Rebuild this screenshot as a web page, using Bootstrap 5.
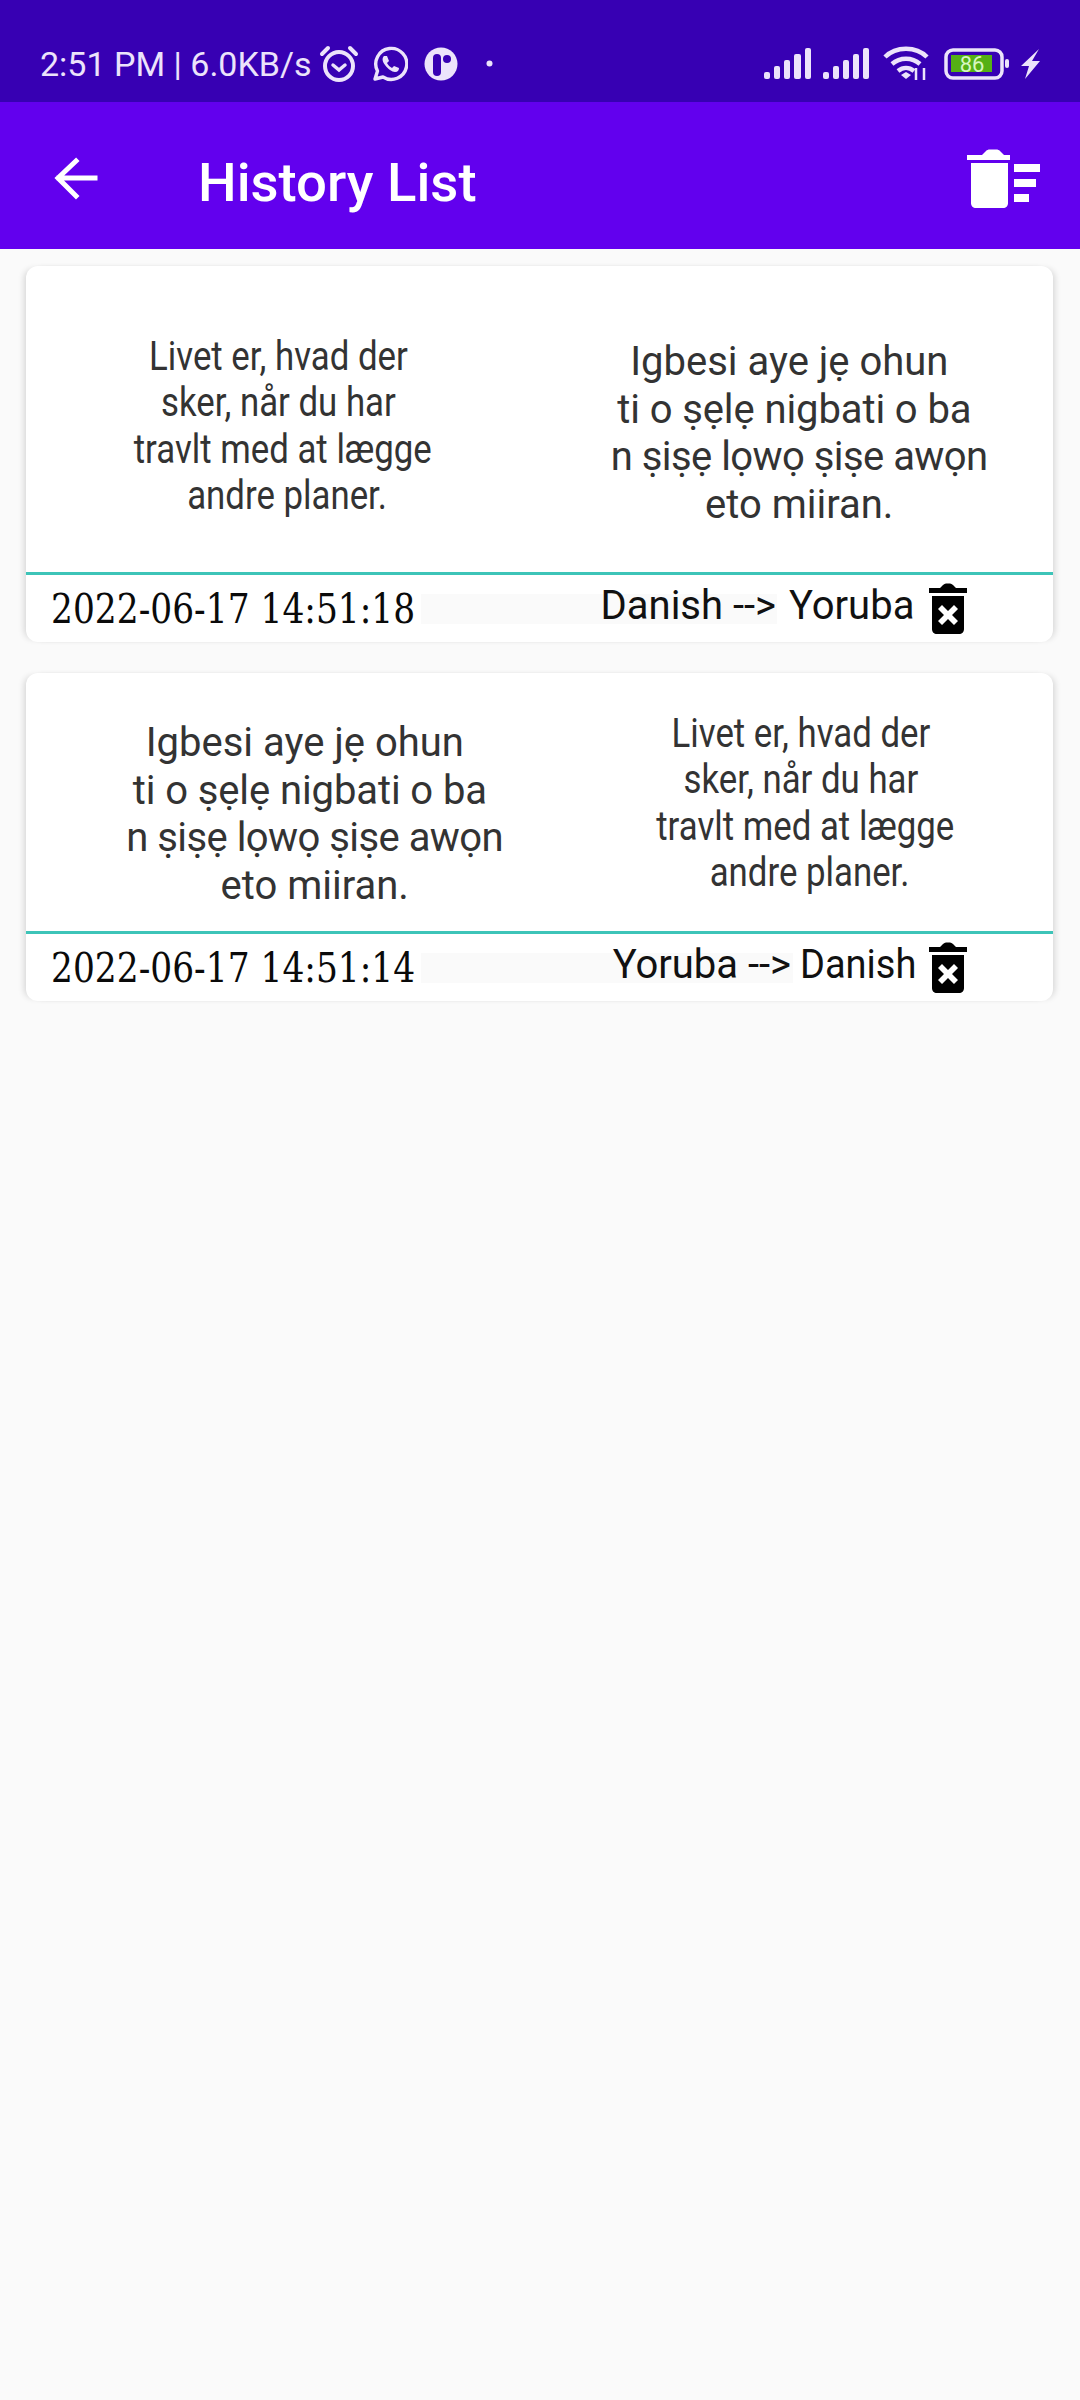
<!DOCTYPE html>
<html lang="en">
<head>
  <meta charset="UTF-8" />
  <meta name="viewport" content="width=device-width, initial-scale=1" />
  <title>History List</title>
  <link rel="stylesheet" href="https://cdn.jsdelivr.net/npm/bootstrap@5.3.3/dist/css/bootstrap.min.css" />
  <style>
    body {
      background: #fafafa;
      font-family: Roboto, "Liberation Sans", sans-serif;
      width: 1080px;
      height: 2400px;
      overflow: hidden;
    }

    .status-strip {
      height: 102px;
      background: #3700b3;
      color: #ece3fb;
      padding: 25px 0 0 40px;
      font-size: 34px;
      line-height: 1;
      white-space: nowrap;
    }

    .status-strip svg { display: block; flex: none; }
    .status-right { margin-left: auto; padding-right: 40px; }

    .title-bar {
      height: 147px;
      background: #6200ee;
      color: #fff;
      padding: 0;
      flex-wrap: nowrap;
    }

    .back-arrow { margin-left: 52px; margin-top: 5px; }
    .page-title { margin-left: 100px; font-size: 54.5px; font-weight: 500; line-height: 1; padding-top: 14px; }
    .clear-all { margin-left: auto; margin-right: 39px; margin-top: 6px; }

    .history-list { padding: 17px 27px 0 26px; }

    .entry {
      border: 0;
      border-radius: 12px;
      background: #fff;
      box-shadow: -5px 0 6px -3px rgba(0, 0, 0, .14), 5px 0 6px -3px rgba(0, 0, 0, .14);
      margin-bottom: 31px;
      overflow: hidden;
    }

    .entry-body { border-bottom: 3px solid #3dc4b8; --bs-gutter-x: 0; margin: 0; }
    .entry-a .entry-body { height: 309px; }
    .entry-b .entry-body { height: 261px; }

    .phrase { color: #333; text-align: center; white-space: nowrap; }
    .phrase-da { line-height: 46.3px; font-size: 40px; }
    .phrase-da span { display: block; transform: scaleX(.87); }
    .phrase-yo { line-height: 47.7px; font-size: 40px; }
    .tight-a { letter-spacing: -.1px; }
    .tight-b { letter-spacing: -.55px; }

    .entry-a .phrase-da { padding: 68px 0 0 0; }
    .entry-a .phrase-yo { padding: 72px 0 0 6px; }
    .entry-b .phrase-yo { padding: 46px 0 0 64px; }
    .entry-b .phrase-da { padding: 38px 0 0 17px; }

    .entry-foot { height: 67px; padding-left: 25px; color: #111; white-space: nowrap; }
    .entry-date {
      width: 370px;
      flex: none;
      font-family: "DejaVu Serif", serif;
      font-size: 41px;
      line-height: 1;
      color: #0a0a0a;
      padding-top: 2px;
      transform: scaleX(.84);
      transform-origin: left center;
    }
    .lang-from { background: #fafafa; height: 30px; line-height: 24px; font-size: 40px; text-align: right; flex: none; }
    .entry-a .lang-from { width: 356px; padding-right: 1px; }
    .entry-b .lang-from { width: 372px; padding-right: 2px; }
    .lang-to { font-size: 40px; line-height: 1; margin-top: -5px; }
    .entry-a .lang-to { margin-left: 12px; }
    .entry-b .lang-to { margin-left: 7px; transform: scaleX(.95); transform-origin: left center; }
    .row-trash { margin-left: auto; margin-right: 86px; }
  </style>
</head>
<body>
  <div class="status-strip d-flex align-items-center">
    <span>2:51 PM | 6.0KB/s</span>
    <svg style="margin-left:7px" width="40" height="38" viewBox="0 0 40 38" fill="none" stroke="#ece3fb" stroke-width="4" stroke-linecap="round">
      <circle cx="20" cy="21" r="14" />
      <path d="M3 9 9 3M37 9 31 3" />
      <path d="M14 20l6 5 6-5" stroke-width="3.5" />
    </svg>
    <svg style="margin-left:13px" width="36" height="36" viewBox="0 0 36 36" fill="none" stroke="#ece3fb" stroke-width="3.4">
      <path d="M3 33l2.500-8A15.500 15.500 0 1 1 11 31z" stroke-linejoin="round" />
      <path d="M12 10c-2 2-2 5 1 9s7 7 10 7c3 0 4-2 4-4l-5-2-2 2c-2-1-4-3-5-5l2-2-2-5z" fill="#ece3fb" stroke="none" />
    </svg>
    <svg class="ms-3" width="34" height="34" viewBox="0 0 34 34">
      <circle cx="17" cy="17" r="16.500" fill="#ece3fb" />
      <rect x="9" y="7" width="8" height="22" rx="4" fill="#3700b3" />
      <circle cx="23" cy="12" r="4" fill="#3700b3" />
    </svg>
    <svg style="margin-left:28px" width="7" height="7" viewBox="0 0 7 7"><circle cx="3.500" cy="3.500" r="3" fill="#ece3fb" /></svg>

    <div class="status-right d-flex align-items-center">
      <svg width="48" height="32" viewBox="0 0 48 32" fill="#ece3fb">
        <rect x="0" y="24" width="6" height="7" rx="2" />
        <rect x="10" y="18" width="6" height="13" rx="2" />
        <rect x="20" y="12" width="6" height="19" rx="2" />
        <rect x="30" y="6" width="7" height="25" rx="2" />
        <rect x="41" y="0" width="6" height="31" rx="2" />
      </svg>
      <svg style="margin-left:11px" width="48" height="32" viewBox="0 0 48 32" fill="#ece3fb">
        <rect x="0" y="24" width="6" height="7" rx="2" />
        <rect x="10" y="18" width="6" height="13" rx="2" />
        <rect x="20" y="12" width="6" height="19" rx="2" />
        <rect x="30" y="6" width="6" height="25" rx="2" />
        <rect x="40" y="0" width="6" height="31" rx="2" />
      </svg>
      <svg style="margin-left:12px" width="46" height="36" viewBox="0 0 46 36" fill="none" stroke="#ece3fb" stroke-width="4.500">
        <path d="M2 11C13 0 33 0 44 11" />
        <path d="M9 18c8-7 20-7 28 0" />
        <path d="M15 25c5-4 11-4 16 0" />
        <path d="M18 29l5-3 5 3-5 4z" fill="#ece3fb" stroke="none" />
        <path d="M33 22v12M41 22v12" stroke-width="2.500" />
      </svg>
      <svg style="margin-left:15px" width="66" height="32" viewBox="0 0 66 32">
        <rect x="2" y="2" width="56" height="28" rx="7" fill="none" stroke="#ece3fb" stroke-width="3.500" />
        <rect x="7" y="7" width="41" height="17" fill="#55b015" />
        <text x="28" y="24" text-anchor="middle" font-family="Roboto, sans-serif" font-size="22" fill="#d6f7c0">86</text>
        <rect x="61" y="11" width="4" height="9" rx="2" fill="#ece3fb" />
      </svg>
      <svg style="margin-left:11px" width="19" height="30" viewBox="0 0 19 30"><path d="M18 0 0 17h8l-4 13L19 12h-8z" fill="#ece3fb" /></svg>
    </div>
  </div>

  <nav class="navbar title-bar">
    <svg class="back-arrow" width="46" height="46" viewBox="0 0 46 46" fill="none" stroke="#fff" stroke-width="5" stroke-linecap="square">
      <path d="M43 23H7M24 6 6 23l18 18" />
    </svg>
    <span class="page-title">History List</span>
    <svg class="clear-all" width="74" height="62" viewBox="0 0 74 62" fill="#fff">
      <path d="M0 7h15l4-4c1-1 2-1.500 4-1.500h6c2 0 3 .5 4 1.500l4 4h6v5H0z" />
      <path d="M4 15h37v40c0 3-2 5-5 5H9c-3 0-5-2-5-5z" />
      <rect x="47" y="16" width="26" height="8" />
      <rect x="47" y="31" width="22" height="8" />
      <rect x="47" y="46" width="15" height="8" />
    </svg>
  </nav>

  <main class="history-list">
    <div class="card entry entry-a">
      <div class="row entry-body">
        <div class="col-6 phrase phrase-da">
          <span>Livet er, hvad der&nbsp;</span>
          <span>sker, når du har&nbsp;</span>
          <span>travlt med at lægge</span>
          <span>&nbsp;andre planer.</span>
        </div>
        <div class="col-6 phrase phrase-yo">
          Igbesi aye jẹ ohun&nbsp;&nbsp;<br><span class="tight-a">ti o ṣẹlẹ nigbati o ba&nbsp;</span><br><span class="tight-b">n ṣiṣẹ lọwọ ṣiṣe awọn</span><br>eto miiran.
        </div>
      </div>
      <div class="entry-foot d-flex align-items-center">
        <span class="entry-date">2022-06-17 14:51:18</span>
        <span class="lang-from">Danish --&gt;</span>
        <span class="lang-to">Yoruba</span>
        <svg class="row-trash" width="38" height="51" viewBox="0 0 38 51" fill="#000">
          <path d="M0 5h11l3-3c1-1 2-1.500 3-1.500h4c1 0 2 .5 3 1.500l3 3h11v5H0z" />
          <path fill-rule="evenodd" d="M3 13h32v33c0 3-2 5-5 5H8c-3 0-5-2-5-5zM13 22l-4 4 6 6-6 6 4 4 6-6 6 6 4-4-6-6 6-6-4-4-6 6z" />
        </svg>
      </div>
    </div>

    <div class="card entry entry-b">
      <div class="row entry-body">
        <div class="col-6 phrase phrase-yo">
          Igbesi aye jẹ ohun&nbsp;&nbsp;<br><span class="tight-a">ti o ṣẹlẹ nigbati o ba&nbsp;</span><br><span class="tight-b">n ṣiṣẹ lọwọ ṣiṣe awọn</span><br>eto miiran.
        </div>
        <div class="col-6 phrase phrase-da">
          <span>Livet er, hvad der&nbsp;</span>
          <span>sker, når du har&nbsp;</span>
          <span>travlt med at lægge</span>
          <span>&nbsp;andre planer.</span>
        </div>
      </div>
      <div class="entry-foot d-flex align-items-center">
        <span class="entry-date">2022-06-17 14:51:14</span>
        <span class="lang-from">Yoruba --&gt;</span>
        <span class="lang-to">Danish</span>
        <svg class="row-trash" width="38" height="51" viewBox="0 0 38 51" fill="#000">
          <path d="M0 5h11l3-3c1-1 2-1.500 3-1.500h4c1 0 2 .5 3 1.500l3 3h11v5H0z" />
          <path fill-rule="evenodd" d="M3 13h32v33c0 3-2 5-5 5H8c-3 0-5-2-5-5zM13 22l-4 4 6 6-6 6 4 4 6-6 6 6 4-4-6-6 6-6-4-4-6 6z" />
        </svg>
      </div>
    </div>
  </main>

  <script src="https://cdn.jsdelivr.net/npm/bootstrap@5.3.3/dist/js/bootstrap.bundle.min.js"></script>
</body>
</html>
